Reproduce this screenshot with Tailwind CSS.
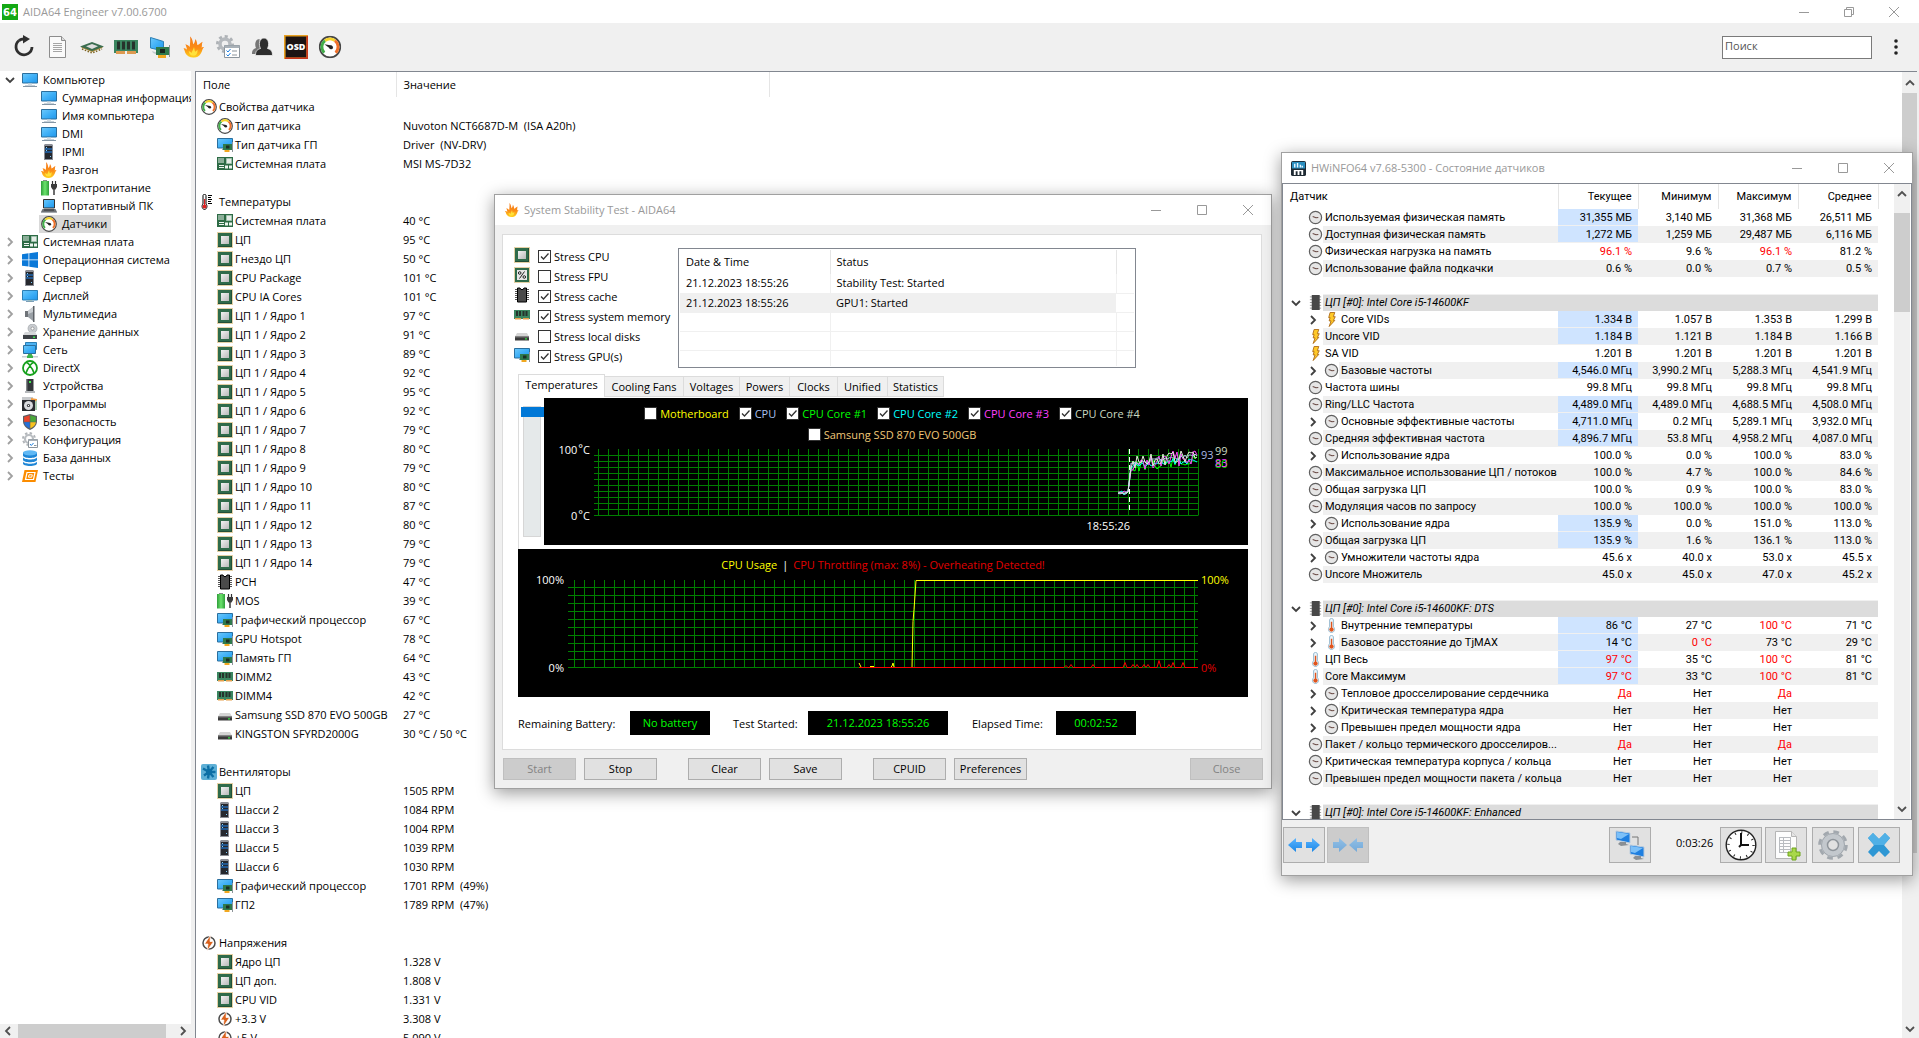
<!DOCTYPE html>
<html lang="ru">
<head>
    <meta charset="UTF-8">
    <meta name="viewport" content="width=device-width, initial-scale=1.0">
    <title>AIDA64 Engineer</title>
    <script src="https://cdn.jsdelivr.net/npm/@tailwindcss/browser@4"></script>
</head>
<body class="h-screen overflow-hidden flex flex-col bg-white text-black text-[11px] leading-4 font-['Open_Sans','Noto_Sans',sans-serif] cursor-default">

    <!-- Icon set -->
    <svg class="absolute size-0" aria-hidden="true" xmlns="http://www.w3.org/2000/svg">
        <defs>
            <linearGradient id="g-blue" x1="0" y1="0" x2="1" y2="1"><stop offset="0" stop-color="#6ec9fb"/><stop offset=".5" stop-color="#3fb0f7"/><stop offset="1" stop-color="#2196ea"/></linearGradient>
            <linearGradient id="g-fire" x1="0" y1="0" x2="0" y2="1"><stop offset="0" stop-color="#f37b1d"/><stop offset=".55" stop-color="#fb8c16"/><stop offset="1" stop-color="#ffd21e"/></linearGradient>
            <linearGradient id="g-grey" x1="0" y1="0" x2="1" y2="1"><stop offset="0" stop-color="#f2f2f2"/><stop offset="1" stop-color="#b9b9b9"/></linearGradient>
            <linearGradient id="g-green" x1="0" y1="0" x2="1" y2="0"><stop offset="0" stop-color="#2f9e3a"/><stop offset=".5" stop-color="#6be36c"/><stop offset="1" stop-color="#2f9e3a"/></linearGradient>
            <linearGradient id="g-arrow" x1="0" y1="0" x2="0" y2="1"><stop offset="0" stop-color="#5ab4ff"/><stop offset="1" stop-color="#1b87e6"/></linearGradient>
        </defs>
        <symbol id="monitor" viewBox="0 0 16 16"><path d="M.5 1.500h15v9.500H.5z" fill="url(#g-blue)" stroke="#2b6f9e"/><path d="M6 11.500h4V13H6z" fill="#d5dde3"/><path d="M1 14.500h14" stroke="#8597a6"/><path d="M3 13.500h10" stroke="#c8d2da"/></symbol>
        <symbol id="display" viewBox="0 0 16 16"><path d="M.5 2.500h15v9.500H.5z" fill="url(#g-blue)" stroke="#2b7fb5"/><path d="M6 12h4v1.500H6z" fill="#9bb"/><path d="M4 13.500h8" stroke="#7d9fb5"/></symbol>
        <symbol id="server" viewBox="0 0 16 16"><path d="M3 1l1-1h7l1 1v15H3z" fill="#8b8e96"/><path d="M4 2h7v13H4z" fill="#26282e"/><path d="M4 5h7M4 8h7" stroke="#1d84f0"/><path d="M5 3h1v1H5zM5 6h1v1H5zM9 12h1v1H9z" fill="#7fd0ff"/></symbol>
        <symbol id="flame" viewBox="0 0 16 16"><path d="M5 0c2 2 2 4 2.400 6C8.500 5 8.800 3.500 9 2c1.500 2 1.200 3.300 1.500 4.500C12 6 13 4.500 14.500 4c-1 2-.2 3-.8 4.500C14.500 8 15 8 15.500 8c-1.500 1.500-1 3-2.500 5-1.200 2-3 3-5.500 3-3 0-5-1.500-6-3.500C1 11 .8 10 0 9c1.200 0 2 .2 2.700 1C2.500 8.500 2 7 1.500 6 3 6.500 4 7 4.800 8 5 5 5.500 3 5 0z" fill="url(#g-fire)"/><path d="M8 8c.5 1.500.2 2.500 1 3.500.8-.5 1-1 1.700-1.500 0 3-1 4.500-3.200 4.500S4.500 13.500 4 11c1 .5 1.700.8 2.300 1.500C6.500 11 7.500 10 8 8z" fill="#ffe23a"/></symbol>
        <symbol id="battery" viewBox="0 0 16 16"><path d="M2 0h4v1h2v14.500H0V1h2z" fill="url(#g-green)"/><path d="M2 0h4v1H2z" fill="#8a8a8a"/><path d="M11.500 1v3M14.500 1v3" stroke="#333" stroke-width="1.200"/><path d="M10 4h6v3l-1.500 2.500h-3L10 7z" fill="#3b3b3b"/><path d="M13 9v6" stroke="#3b3b3b" stroke-width="1.500"/></symbol>
        <symbol id="laptop" viewBox="0 0 16 16"><path d="M2.500 1.500h11v8.500h-11z" fill="url(#g-blue)" stroke="#333"/><path d="M1.500 11h13l1.500 3H0z" fill="#6e7277"/><path d="M3 11.500h10v1H3z" fill="#2c2f33"/><path d="M0 14h16v1H0z" fill="#a5aab0"/></symbol>
        <symbol id="gauge" viewBox="0 0 16 16"><circle cx="8" cy="8" r="7.300" fill="#fff" stroke="#474747" stroke-width="1.200"/><path d="M3.900 12A5.700 5.700 0 0 1 4.500 3.500" fill="none" stroke="#41ad49" stroke-width="2"/><path d="M4.500 3.500A5.700 5.700 0 0 1 11.500 3.500" fill="none" stroke="#f5d32d" stroke-width="2"/><path d="M11.500 3.500A5.700 5.700 0 0 1 12 12" fill="none" stroke="#f0702a" stroke-width="2"/><path d="M4 6l5.200 1-1.200 2z" fill="#222"/><circle cx="8.800" cy="8.300" r="1.300" fill="#222"/></symbol>
        <symbol id="board" viewBox="0 0 16 16"><path d="M0 1h16v13H0z" fill="#2d6b45"/><path d="M2 2v5M4 2v5M6 2v5" stroke="#e9f2ec"/><path d="M9.500 2.500h5v5h-5z" fill="#e4ebe6" stroke="#9fc2ad"/><path d="M2 9h5v1H2zM2 11h5v1H2zM8 9.500h3v3H8zM12 9.500h3v3h-3z" fill="#eef5f0"/></symbol>
        <symbol id="windows" viewBox="0 0 16 16"><path d="M0 2.200l6.500-.9v6.200H0zM7.300 1.200L16 0v7.500H7.300zM0 8.300h6.500v6.300L0 13.700zM7.300 8.300H16V16l-8.700-1.200z" fill="#0b79d8"/></symbol>
        <symbol id="speaker" viewBox="0 0 16 16"><path d="M3 5h3v6H3z" fill="#6f7378"/><path d="M6 5l5-4v14l-5-4z" fill="#9aa0a6"/><path d="M11 0h1.500v16H11z" fill="#5d6166"/><path d="M6 5l5-4v5l-5 2z" fill="#c9cdd1"/></symbol>
        <symbol id="storage" viewBox="0 0 16 16"><circle cx="10.500" cy="4.500" r="4.500" fill="#c9ccd0" stroke="#9b9fa3" stroke-width=".6"/><circle cx="10.500" cy="4.500" r="1.500" fill="#fff" stroke="#888" stroke-width=".7"/><path d="M3 8h10l2 3H1z" fill="#d6d8da"/><path d="M1 11h14v4H1z" fill="#3d4146"/><path d="M11 12.500h2v1.500h-2z" fill="#35e04a"/></symbol>
        <symbol id="network" viewBox="0 0 16 16"><path d="M3.500.5h11v7h-11z" fill="#4bb2f2" stroke="#2b7fb5"/><path d="M1.500 3.500h12v8h-12z" fill="url(#g-blue)" stroke="#2b6f9e"/><path d="M6 12h4v2H6z" fill="#4caf50"/><path d="M0 14h16v1.500H0z" fill="#c9cfd3"/><path d="M5 13.500h6v2.500H5z" fill="#3cb44a"/></symbol>
        <symbol id="directx" viewBox="0 0 16 16"><circle cx="8" cy="8" r="7" fill="#fff" stroke="#16a01c" stroke-width="1.800"/><path d="M4 13c1-3 2.500-5.500 4-7 1.500 1.500 3 4 4 7M4.500 2.500C6 3 7 4 8 5.500 9 4 10 3 11.500 2.500" fill="none" stroke="#16a01c" stroke-width="1.600"/></symbol>
        <symbol id="device" viewBox="0 0 16 16"><path d="M4.500 1h7v12h-7z" fill="#33363a"/><path d="M7 3h2v2H7z" fill="#42e84f"/><path d="M3 13h10v2H3z" fill="#b5b8bb"/><path d="M4.500 1h1v12h-1z" fill="#6c7075"/></symbol>
        <symbol id="programs" viewBox="0 0 16 16"><path d="M0 1h11v3H0z" fill="#c7c9cc"/><path d="M9 2l6 1v7H9z" fill="#f09a3e"/><path d="M11 7l4-3v10h-4z" fill="#a8c9b0"/><path d="M0 4h13v11H0z" fill="#2a2c30"/><circle cx="6.500" cy="9.500" r="4.500" fill="#d9dbde"/><circle cx="6.500" cy="9.500" r="1.600" fill="#2a2c30"/><circle cx="6.500" cy="9.500" r=".7" fill="#fff"/></symbol>
        <symbol id="shield" viewBox="0 0 16 16"><path d="M8 0l7 2v5c0 4-3 7.500-7 9-4-1.500-7-5-7-9V2z" fill="#5a5f63"/><path d="M7.700 1.300v6.400H2.100V2.900z" fill="#e8452c"/><path d="M8.300 1.300v6.400h5.600V2.900z" fill="#4aa83a"/><path d="M2.100 8.300h5.600v6.200c-3-1.300-5.200-3.500-5.600-6.200z" fill="#2470d8"/><path d="M13.900 8.300H8.300v6.200c3-1.300 5.200-3.500 5.600-6.200z" fill="#f9c31d"/></symbol>
        <symbol id="config" viewBox="0 0 16 16"><circle cx="7" cy="7" r="6" fill="none" stroke="#b0b4b8" stroke-width="2" stroke-dasharray="2.400 2.300"/><circle cx="7" cy="7" r="4" fill="#fff" stroke="#b9bdc1" stroke-width="2.200"/><path d="M6.500 7.500h9v8h-9z" fill="#fff" stroke="#8c959c"/><path d="M6.500 7.500h9v1.500h-9z" fill="#a9b1b8"/><path d="M8 12l1.300 1.500L11.500 11" fill="none" stroke="#1d7fe0"/><path d="M12 13.500h2.500" stroke="#8c959c"/></symbol>
        <symbol id="database" viewBox="0 0 16 16"><path d="M1 2.500v11C1 15 4 16 8 16s7-1 7-2.500v-11z" fill="#1f86d6"/><path d="M1 5.800c1 3 13 3 14 0v1.400c-1 3-13 3-14 0zM1 10c1 3 13 3 14 0v1.400c-1 3-13 3-14 0z" fill="#fff"/><ellipse cx="8" cy="2.800" rx="7" ry="2.600" fill="#5fb8f5"/></symbol>
        <symbol id="tests" viewBox="0 0 16 16"><path d="M2.500 2H16l-2.500 12H0z" fill="#fb8c00"/><path d="M5 4.500h8L11.500 11.500H3.500z" fill="none" stroke="#fff" stroke-width="1.200"/><path d="M7 6.800h3.300l-.6 2.400H6.500z" fill="none" stroke="#fff"/></symbol>
        <symbol id="cpu" viewBox="0 0 16 16"><path d="M.5 .5h15v15H.5z" fill="none" stroke="#c9a24a" stroke-dasharray="1 1"/><path d="M1 1h14v14H1z" fill="#2f6b4a"/><path d="M1 14h14v1H1zM14 1h1v14h-1z" fill="#234f38"/><path d="M4 4h8v8H4z" fill="url(#g-grey)"/></symbol>
        <symbol id="fpu" viewBox="0 0 16 16"><path d="M.5 .5h15v15H.5z" fill="none" stroke="#c9a24a" stroke-dasharray="1 1"/><path d="M1 1h14v14H1z" fill="#2f6b4a"/><path d="M3 3h10v10H3z" fill="#e6e6e6"/><circle cx="5.700" cy="6" r="1.300" fill="none" stroke="#222"/><circle cx="10.300" cy="10" r="1.300" fill="none" stroke="#222"/><path d="M10.500 4.500l-5 7" stroke="#222"/></symbol>
        <symbol id="chip" viewBox="0 0 16 16"><path d="M1 2.500h14M1 4.500h14M1 6.500h14M1 8.500h14M1 10.500h14M1 12.500h14" stroke="#555"/><path d="M3.500 1H6l1 1.500h2L10 1h2.500v14h-9z" fill="#4a4a4a" stroke="#000"/></symbol>
        <symbol id="gpu" viewBox="0 0 16 16"><path d="M.5 1.500h15v9.500H.5z" fill="url(#g-blue)" stroke="#2b6f9e"/><path d="M6 7h9v6H6z" fill="#2f7a4c"/><path d="M9 8.500h3.500v3H9z" fill="#1c2f25"/><path d="M15.500 5v10" stroke="#8d9499"/><path d="M7.500 13h5v2h-5z" fill="#f1a820"/><path d="M5 11.500h1v1.500H5z" fill="#9aa"/></symbol>
        <symbol id="ram" viewBox="0 0 16 16"><path d="M0 3h16v9H0z" fill="#3b8660"/><path d="M2 4h2v5H2zM5 4h2v5H5zM8.500 4h2v5h-2zM11.500 4h2v5h-2z" fill="#26332c"/><path d="M1 11h6v1.500H1zM9 11h6v1.500H9z" fill="#e6a04c"/></symbol>
        <symbol id="drive" viewBox="0 0 16 16"><path d="M3 6h10l2 3.500H1z" fill="#d4d4d4"/><path d="M1 9.500h14v4H1z" fill="#3a3a3a"/><path d="M1 9.500h14v1H1z" fill="#777"/><path d="M11 11.200h2v1.300h-2z" fill="#30e040"/></symbol>
        <symbol id="thermo" viewBox="0 0 16 16"><path d="M5 1.500c0-1.500-3-1.500-3 0V10c-2 2-.5 5.500 1.500 5.500S7 12 5 10z" fill="#fff" stroke="#000"/><path d="M3 5h1.200v6H3z" fill="#d22"/><circle cx="3.500" cy="12.500" r="2" fill="#d22"/><path d="M7 1.500h4M7 3.500h3M7 5.500h4M7 7.500h3M7 9.500h4" stroke="#000"/></symbol>
        <symbol id="fan" viewBox="0 0 16 16"><rect width="16" height="16" rx="2" fill="#5fb0d6"/><path d="M8 8L7 1.500M8 8L12.500 3M8 8l6.500 0M8 8l4.500 5M8 8l-1 6.500M8 8l-5 3.500M8 8L2 4.500" stroke="#0d6fa5" stroke-width="2.400"/><circle cx="8" cy="8" r="3" fill="#0d6fa5"/></symbol>
        <symbol id="volt" viewBox="0 0 16 16"><circle cx="8" cy="8" r="6" fill="#fff" stroke="#4b4b4b" stroke-width="1.500"/><path d="M9.500 0L3.500 9H7l-1 7 6.500-9.500H9z" fill="#d9611c" stroke="#fff" stroke-width=".7"/></symbol>
        <symbol id="dial" viewBox="0 0 16 16"><circle cx="8" cy="8" r="6.500" fill="#e6e6e6" stroke="#606060" stroke-width="1.300"/><path d="M5 7l3.500 1.300L11 8" fill="none" stroke="#6a4a44" stroke-width="1.200"/></symbol>
        <symbol id="bolt" viewBox="0 0 16 16"><path d="M6.500 .5h5L10 5h2l-2 4h1.500L5.500 15.500 7.500 9.500H5.500L6.500 6H5z" fill="#ffc928" stroke="#a86410" stroke-width=".9"/></symbol>
        <symbol id="therm" viewBox="0 0 16 16"><path d="M6 2c0-2 4-2 4 0v7.500c2.500 2 1 6-2 6s-4.500-4-2-6z" fill="#eef6fb" stroke="#8fb4cc"/><path d="M7.300 4h1.500v7H7.300z" fill="#e0551d"/><circle cx="8" cy="12.300" r="2.300" fill="#e0551d"/></symbol>
        <symbol id="darkchip" viewBox="0 0 16 16"><path d="M2 2h12M2 5h12M2 8h12M2 11h12M2 14h12" stroke="#999"/><path d="M4 0h8.500v16H4z" fill="#484848"/></symbol>
        <symbol id="chev-r" viewBox="0 0 10 10"><path d="M3 1l4 4-4 4" fill="none" stroke="currentColor" stroke-width="1.800"/></symbol>
        <symbol id="chev-d" viewBox="0 0 10 10"><path d="M1 3l4 4 4-4" fill="none" stroke="currentColor" stroke-width="1.800"/></symbol>
        <symbol id="chev-l" viewBox="0 0 10 10"><path d="M7 1L3 5l4 4" fill="none" stroke="currentColor" stroke-width="1.800"/></symbol>
        <symbol id="chev-u" viewBox="0 0 10 10"><path d="M1 7l4-4 4 4" fill="none" stroke="currentColor" stroke-width="1.800"/></symbol>
        <symbol id="w-min" viewBox="0 0 10 10"><path d="M0 5.500h10" stroke="currentColor"/></symbol>
        <symbol id="w-max" viewBox="0 0 10 10"><path d="M.5 .5h9v9h-9z" fill="none" stroke="currentColor"/></symbol>
        <symbol id="w-res" viewBox="0 0 10 10"><path d="M.5 2.500h7v7h-7zM2.500 2.500v-2h7v7h-2" fill="none" stroke="currentColor"/></symbol>
        <symbol id="w-x" viewBox="0 0 10 10"><path d="M0 0l10 10M10 0L0 10" stroke="currentColor"/></symbol>
    </svg>

    <!-- Title bar -->
    <header class="h-[23px] shrink-0 flex items-center pl-[2px] pr-5 text-[#999]">
        <svg viewBox="0 0 16 16" class="size-4 font-['DejaVu_Sans',sans-serif]"><path d="M0 0h16v16H0z" fill="#14a814"/><text x="8" y="12" text-anchor="middle" font-size="10" font-weight="bold" fill="#fff">64</text></svg>
        <h1 class="ml-[5px] flex-1">AIDA64 Engineer v7.00.6700</h1>
        <div class="flex gap-[35px]">
            <button aria-label="Свернуть"><svg class="size-[10px]"><use href="#w-min"/></svg></button>
            <button aria-label="Восстановить"><svg class="size-[10px]"><use href="#w-res"/></svg></button>
            <button aria-label="Закрыть"><svg class="size-[10px]"><use href="#w-x"/></svg></button>
        </div>
    </header>

    <!-- Toolbar -->
    <div class="h-12 shrink-0 flex items-center bg-[#f0f0f0] pl-3 pr-4">
        <div class="flex flex-1 items-center gap-[10px]">
            <button aria-label="Обновить"><svg viewBox="0 0 24 24" class="size-6"><path d="M7 5.500A8 8 0 1 0 20 12" fill="none" stroke="#2f2f2f" stroke-width="2.800"/><path d="M7 5.500A8 8 0 0 1 12 4" fill="none" stroke="#2f2f2f" stroke-width="2.800"/><path d="M11 0l7 4-7 4.500z" fill="#2f2f2f"/></svg></button>
            <button aria-label="Отчёт"><svg viewBox="0 0 24 24" class="size-6"><path d="M3.500 1.500h12l4 4v17h-16z" fill="#fafafa" stroke="#8d8d8d"/><path d="M15.500 1.500v4h4" fill="#ddd" stroke="#8d8d8d"/><path d="M7 8.500h9M7 10.500h9M7 12.500h9M7 14.500h9M7 16.500h9" stroke="#a5a5a5"/></svg></button>
            <button aria-label="ЦП"><svg viewBox="0 0 24 24" class="size-6"><path d="M1 12.500L12 8l11 4.500L12 17z" fill="#a9862f"/><path d="M2 14l10 4 10-4" fill="none" stroke="#7c6322" stroke-width="1.500" stroke-dasharray="1.500 1.500"/><path d="M0 11.500L12 7l12 4.500L12 16z" fill="#3b6d50"/><path d="M6 11.300L12 9l6 2.300L12 14z" fill="#dedede"/></svg></button>
            <button aria-label="Память"><svg viewBox="0 0 24 24" class="size-6"><path d="M0 5h24v13H0z" fill="#3b8660"/><path d="M3 6.500h3v8H3zM8 6.500h3v8H8zM13 6.500h3v8h-3zM18 6.500h3v8h-3z" fill="#26332c"/><path d="M2 16h9v3H2zM13 16h9v3h-9z" fill="#dd9a50"/><path d="M11 16h2v3h-2z" fill="#f0f0f0"/></svg></button>
            <button aria-label="Видео"><svg viewBox="0 0 24 24" class="size-6"><path d="M2.500 2.500l13 4v9.500l-13-3z" fill="url(#g-blue)" stroke="#2b7fb5"/><path d="M4 16l6 2v2l-5-2z" fill="#c3cbd0"/><path d="M8 12h13v8H8z" fill="#2f7a4c"/><path d="M12 14h5v4h-5z" fill="#17261d"/><path d="M21.500 10v12" stroke="#8d9499"/><path d="M10 20h8v3h-8z" fill="#f1a820"/></svg></button>
            <button aria-label="Тест стабильности"><svg viewBox="-1 -1 18 18" class="size-6"><use href="#flame" width="16" height="16"/></svg></button>
            <button aria-label="Настройка"><svg viewBox="0 0 24 24" class="size-6"><circle cx="9" cy="9" r="7.500" fill="none" stroke="#aeb2b6" stroke-width="3" stroke-dasharray="3 2.800"/><circle cx="9" cy="9" r="5" fill="none" stroke="#b5b9bd" stroke-width="3.500"/><path d="M8.500 10.500h15v12h-15z" fill="#fff" stroke="#8c959c"/><path d="M8.500 10.500h15v2.500h-15z" fill="#a9b1b8"/><path d="M10.500 15.500l1.500 1.500 2.500-3M10.500 19.500l1.500 1.500 2.500-3" fill="none" stroke="#1d7fe0"/><path d="M16 16h5M16 20h5" stroke="#8c959c"/></svg></button>
            <button aria-label="Пользователи"><svg viewBox="0 0 24 24" class="size-6"><path d="M2 19c0-4 1.500-5 4-6C4.500 10.500 5 4 9.500 4l1 8-1 7z" fill="#777"/><path d="M5.500 20.500c0-5 2-6 5-7C8.500 10 9 3 14 3s5.500 7 3.500 10.500c3 1 5 2 5 7z" fill="#2e2e2e" stroke="#f0f0f0" stroke-width=".8"/></svg></button>
            <button aria-label="OSD"><svg viewBox="0 0 24 24" class="size-6"><path d="M.8 .8h22.400v22.400H.8z" fill="#1c1414" stroke="#e8a020" stroke-width="1.600"/><path d="M23.200 1v22.200H1" fill="none" stroke="#c8341c" stroke-width="1.600"/><text x="12" y="15" text-anchor="middle" font-size="9" font-weight="800" fill="#fff">OSD</text></svg></button>
            <button aria-label="Датчики"><svg viewBox="-.5 -.5 17 17" class="size-6"><use href="#gauge" width="16" height="16"/></svg></button>
        </div>
        <input type="text" placeholder="Поиск" aria-label="Поиск" class="w-[150px] h-[23px] border border-[#7a7a7a] bg-white px-[2px] pb-1 placeholder:text-[#555] outline-none">
        <button aria-label="Меню" class="ml-[17px]"><svg viewBox="0 0 14 20" class="w-[14px] h-5" fill="#222"><circle cx="7" cy="4" r="1.800"/><circle cx="7" cy="10" r="1.800"/><circle cx="7" cy="16" r="1.800"/></svg></button>
    </div>

    <!-- Tree and sensor list -->
    <div class="flex-1 min-h-0 flex bg-[#f0f0f0] pr-[2px]">
        <nav class="w-[191px] shrink-0 flex flex-col bg-white overflow-hidden">
            <ul id="tree" class="flex-1 min-h-0 overflow-hidden"></ul>
            <div class="h-[14px] shrink-0 flex items-center justify-between bg-[#f0f0f0] px-[3px] text-[#505050]">
                <svg class="size-[10px]"><use href="#chev-l"/></svg>
                <div class="w-[148px] h-full bg-[#cdcdcd] mr-3 ml-1"></div>
                <svg class="size-[10px]"><use href="#chev-r"/></svg>
            </div>
        </nav>
        <main class="ml-1 flex-1 min-w-0 flex bg-white border-l border-t border-[#828790] overflow-hidden">
            <div class="flex-1 min-w-0 overflow-hidden">
                <table class="w-full table-fixed border-collapse">
                    <colgroup><col class="w-[200px]"><col class="w-[373px]"><col></colgroup>
                    <thead>
                        <tr class="h-[25px] text-left">
                            <th class="font-normal pl-[7px] border-r border-[#e5e5e5]">Поле</th>
                            <th class="font-normal pl-[7px] border-r border-[#e5e5e5]">Значение</th>
                            <th></th>
                        </tr>
                    </thead>
                    <tbody id="sensors"></tbody>
                </table>
            </div>
            <div class="w-[15px] shrink-0 flex flex-col items-center justify-between bg-[#f0f0f0] py-1 text-[#505050]">
                <svg class="size-[10px] my-[2px]"><use href="#chev-u"/></svg>
                <div class="w-full h-[760px] mb-auto mt-[3px] bg-[#cdcdcd]"></div>
                <svg class="size-[10px]"><use href="#chev-d"/></svg>
            </div>
        </main>
    </div>

    <!-- System Stability Test -->
    <section class="absolute left-[494px] top-[194px] w-[778px] border border-[#a0a0a0] bg-[#f0f0f0] shadow-[0_4px_16px_rgba(0,0,0,0.4)]">
        <header class="h-[30px] flex items-center bg-white pl-[10px] pr-[18px] text-[#999]">
            <svg class="size-[14px]"><use href="#flame"/></svg>
            <h2 class="ml-[5px] flex-1">System Stability Test - AIDA64</h2>
            <div class="flex gap-9">
                <button aria-label="Minimize"><svg class="size-[10px]"><use href="#w-min"/></svg></button>
                <button aria-label="Maximize"><svg class="size-[10px]"><use href="#w-max"/></svg></button>
                <button aria-label="Close window"><svg class="size-[10px]"><use href="#w-x"/></svg></button>
            </div>
        </header>
        <div class="mx-[7px] mt-[9px] mr-[9px] px-[15px] pr-[13px] border border-[#dcdcdc] bg-white">
            <div class="flex pt-[11px] pb-[6px] -ml-1">
                <div id="stress" class="w-[164px] shrink-0"></div>
                <div class="mt-[2px] w-[458px] h-[120px] border border-[#828790] p-[1px]">
                    <table class="w-full table-fixed border-collapse">
                        <colgroup><col class="w-[150px]"><col class="w-[286px]"><col></colgroup>
                        <thead>
                            <tr class="h-[24px] text-left">
                                <th class="font-normal pl-[6px] border-r border-[#e5e5e5]">Date &amp; Time</th>
                                <th class="font-normal pl-[6px] border-r border-[#e5e5e5]">Status</th>
                                <th></th>
                            </tr>
                        </thead>
                        <tbody>
                            <tr class="h-[19px] border-b border-[#f0f0f0]"><td class="pl-[6px] border-r border-[#f0f0f0]">21.12.2023 18:55:26</td><td class="pl-[6px] border-r border-[#f0f0f0]">Stability Test: Started</td><td></td></tr>
                            <tr class="h-[19px] border-b border-[#f0f0f0]"><td class="pl-[6px] bg-[#f0f0f0]">21.12.2023 18:55:26</td><td class="pl-[6px] bg-[#f0f0f0]">GPU1: Started</td><td></td></tr>
                            <tr class="h-[19px] border-b border-[#f0f0f0]"><td class="border-r border-[#f0f0f0]"></td><td class="border-r border-[#f0f0f0]"></td><td></td></tr>
                            <tr class="h-[19px] border-b border-[#f0f0f0]"><td class="border-r border-[#f0f0f0]"></td><td class="border-r border-[#f0f0f0]"></td><td></td></tr>
                            <tr class="h-[16px]"><td class="border-r border-[#f0f0f0]"></td><td class="border-r border-[#f0f0f0]"></td><td></td></tr>
                        </tbody>
                    </table>
                </div>
            </div>

            <div role="tablist" class="flex items-end h-[23px]">
                <button role="tab" aria-selected="true" class="w-[87px] h-[23px] pb-[2px] border border-b-0 border-[#dcdcdc] bg-white whitespace-nowrap">Temperatures</button>
                <button role="tab" class="w-[79px] h-[21px] border border-l-0 border-[#dcdcdc] bg-[#f0f0f0] whitespace-nowrap">Cooling Fans</button>
                <button role="tab" class="w-[56px] h-[21px] border border-l-0 border-[#dcdcdc] bg-[#f0f0f0]">Voltages</button>
                <button role="tab" class="w-[50px] h-[21px] border border-l-0 border-[#dcdcdc] bg-[#f0f0f0]">Powers</button>
                <button role="tab" class="w-[48px] h-[21px] border border-l-0 border-[#dcdcdc] bg-[#f0f0f0]">Clocks</button>
                <button role="tab" class="w-[50px] h-[21px] border border-l-0 border-[#dcdcdc] bg-[#f0f0f0]">Unified</button>
                <button role="tab" class="w-[56px] h-[21px] border border-l-0 border-[#dcdcdc] bg-[#f0f0f0]">Statistics</button>
            </div>
            <div class="flex border-l border-[#dcdcdc] pt-px pb-1">
                <div class="w-[25px] shrink-0 pl-px pt-2">
                    <input type="range" value="0" aria-label="Scale" class="block w-[23px] h-[131px] appearance-none bg-transparent [writing-mode:vertical-lr] [&::-webkit-slider-runnable-track]:w-[18px] [&::-webkit-slider-runnable-track]:h-full [&::-webkit-slider-runnable-track]:bg-[#e5e9ea] [&::-webkit-slider-runnable-track]:border [&::-webkit-slider-runnable-track]:border-[#d6d6d6] [&::-webkit-slider-thumb]:appearance-none [&::-webkit-slider-thumb]:w-[23px] [&::-webkit-slider-thumb]:h-[10px] [&::-webkit-slider-thumb]:-ml-[3px] [&::-webkit-slider-thumb]:bg-[#0078d7]">
                </div>
                <div class="relative flex-1 bg-black">
                    <div class="absolute inset-x-0 top-[9px] pr-2 flex flex-col items-center gap-2">
                        <div id="series" class="flex gap-[10px]"></div>
                        <div id="series2" class="flex"></div>
                    </div>
                    <svg viewBox="0 0 704 147" class="block w-full h-[147px]">
                        <path id="grid1" fill="none" stroke="#008000"/>
                        <path d="M585.500 51v64" stroke="#fff" stroke-dasharray="5 3"/>
                        <g id="temps" fill="none"></g>
                        <g font-size="11" fill="#fff">
                            <text x="46" y="56" text-anchor="end">100<tspan dx="1" dy="-2">°</tspan><tspan dy="2">C</tspan></text>
                            <text x="46" y="122" text-anchor="end">0<tspan dx="1" dy="-2">°</tspan><tspan dy="2">C</tspan></text>
                            <text x="586" y="132" text-anchor="end">18:55:26</text>
                            <text x="657" y="61" fill="#a9b8e6">93</text>
                            <text x="671" y="57" fill="#c8d8c0">99</text>
                            <text x="671" y="70" fill="#00ff00">80</text>
                            <text x="671" y="69" fill="#ff40ff">83</text>
                        </g>
                    </svg>
                </div>
            </div>
            <svg viewBox="0 0 730 148" class="block w-full h-[148px] bg-black">
                <path id="grid2" fill="none" stroke="#008000"/>
                <path d="M341 114l2 4M352 117.500h4M373 118l1-1 1-3 1 4M394 118.500l1-46 1-12 2-29h282" fill="none" stroke="#ff0"/>
                <path id="throttle" fill="none" stroke="#f00"/>
                <g font-size="11">
                    <text x="365" y="20" text-anchor="middle" fill="#e00000"><tspan fill="#ff0">CPU Usage</tspan><tspan fill="#fff" dx="5">|</tspan><tspan dx="5">CPU Throttling (max: 8%) - Overheating Detected!</tspan></text>
                    <text x="46" y="35" text-anchor="end" fill="#fff">100%</text>
                    <text x="46" y="123" text-anchor="end" fill="#fff">0%</text>
                    <text x="683" y="35" fill="#ff0">100%</text>
                    <text x="683" y="123" fill="#e00000">0%</text>
                </g>
            </svg>
            <div class="flex items-center pt-[14px] pb-[13px]">
                <span class="w-[112px]">Remaining Battery:</span>
                <output class="w-20 h-6 mb-px bg-black text-[#0f0] text-center leading-6">No battery</output>
                <span class="ml-[23px] w-[75px]">Test Started:</span>
                <output class="w-[140px] h-6 mb-px bg-black text-[#0f0] text-center leading-6">21.12.2023 18:55:26</output>
                <span class="ml-6 w-[84px]">Elapsed Time:</span>
                <output class="w-20 h-6 mb-px bg-black text-[#0f0] text-center leading-6">00:02:52</output>
            </div>
        </div>
        <div class="flex gap-2 p-2">
            <button disabled class="w-[73px] h-[22px] border border-[#bfbfbf] bg-[#ccc] text-[#838383]">Start</button>
            <button class="w-[73px] h-[22px] border border-[#adadad] bg-[#e1e1e1]">Stop</button>
            <button class="ml-[23px] w-[73px] h-[22px] border border-[#adadad] bg-[#e1e1e1]">Clear</button>
            <button class="w-[73px] h-[22px] border border-[#adadad] bg-[#e1e1e1]">Save</button>
            <button class="ml-[23px] w-[73px] h-[22px] border border-[#adadad] bg-[#e1e1e1]">CPUID</button>
            <button class="w-[73px] h-[22px] border border-[#adadad] bg-[#e1e1e1]">Preferences</button>
            <button disabled class="ml-auto w-[73px] h-[22px] border border-[#bfbfbf] bg-[#ccc] text-[#838383]">Close</button>
        </div>
    </section>

    <!-- HWiNFO64 -->
    <section class="absolute right-[6px] top-[152px] w-[632px] border border-[#a0a0a0] bg-[#f0f0f0] shadow-[0_4px_16px_rgba(0,0,0,0.4)]">
        <header class="h-[30px] flex items-center bg-white pl-[9px] pr-[18px] text-[#999]">
            <svg viewBox="0 0 16 16" class="size-[15px]"><rect width="16" height="16" rx="2" fill="#1e2a33"/><path d="M1 1h14v7H1z" fill="#2b8fc0"/><path d="M4 3v4M7 2v5M10 4v3M12 5v2" stroke="#e8f6ff" stroke-width="1.500"/><path d="M3 9.500h10v1.500H3zM3 11h2v4H3zM7 11h2v4H7zM11 11h2v4h-2z" fill="#fff"/></svg>
            <h2 class="ml-[5px] flex-1">HWiNFO64 v7.68-5300 - Состояние датчиков</h2>
            <div class="flex gap-9">
                <button aria-label="Свернуть"><svg class="size-[10px]"><use href="#w-min"/></svg></button>
                <button aria-label="Развернуть"><svg class="size-[10px]"><use href="#w-max"/></svg></button>
                <button aria-label="Закрыть"><svg class="size-[10px]"><use href="#w-x"/></svg></button>
            </div>
        </header>
        <div class="h-[637px] flex bg-white border border-[#828790] overflow-hidden font-['Roboto','Open_Sans',sans-serif]">
            <div class="flex-1 overflow-hidden">
                <table class="w-[595px] table-fixed border-collapse">
                    <colgroup><col class="w-[275px]"><col class="w-20"><col class="w-20"><col class="w-20"><col class="w-20"></colgroup>
                    <thead>
                        <tr class="h-[25px] text-right">
                            <th class="font-normal text-left pl-[7px] border-r border-[#e5e5e5]">Датчик</th>
                            <th class="font-normal pr-[6px] border-r border-[#e5e5e5]">Текущее</th>
                            <th class="font-normal pr-[6px] border-r border-[#e5e5e5]">Минимум</th>
                            <th class="font-normal pr-[6px] border-r border-[#e5e5e5]">Максимум</th>
                            <th class="font-normal pr-[6px] border-r border-[#e5e5e5]">Среднее</th>
                        </tr>
                    </thead>
                    <tbody id="hw"></tbody>
                </table>
            </div>
            <div class="mr-px w-[16px] shrink-0 flex flex-col items-center bg-[#f0f0f0] py-[5px] text-[#505050]">
                <svg class="size-[10px]"><use href="#chev-u"/></svg>
                <div class="mt-[14px] w-full h-[99px] bg-[#cdcdcd]"></div>
                <svg class="size-[10px] mt-auto"><use href="#chev-d"/></svg>
            </div>
        </div>
        <div class="flex items-center pl-px pr-3 pt-[7px] pb-3">
            <button aria-label="Развернуть столбцы" class="w-[42px] h-9 border border-[#adadad] bg-[#e1e1e1] flex items-center justify-center"><svg viewBox="0 0 34 20" class="w-[34px] h-5" fill="url(#g-arrow)"><path d="M1 10l8-7v4h6v6H9v4zM33 10l-8-7v4h-6v6h6v4z"/></svg></button>
            <button disabled aria-label="Свернуть столбцы" class="ml-[2px] w-[42px] h-9 border border-[#bfbfbf] bg-[#ccc] flex items-center justify-center"><svg viewBox="0 0 34 20" class="w-[34px] h-5 opacity-50" fill="url(#g-arrow)"><path d="M16 10L8 3v4H2v6h6v4zM18 10l8-7v4h6v6h-6v4z"/></svg></button>
            <button aria-label="Сеть" class="ml-auto w-[42px] h-9 border border-[#adadad] bg-[#e1e1e1] flex items-center justify-center"><svg viewBox="0 0 32 32" class="size-8"><path d="M18 8h6v8" fill="none" stroke="#777"/><path d="M2 2l14 2v10L2 11z" fill="#1f7fe0" stroke="#bcd"/><path d="M3 3l12 2-8 5-4-1z" fill="#7cc0f8"/><path d="M6 13h6v2l3 1-8 1-3-2z" fill="#8a8f94"/><path d="M16 16l14 2v10l-14-3z" fill="#1f7fe0" stroke="#bcd"/><path d="M17 17l12 2-8 5-4-1z" fill="#7cc0f8"/><path d="M21 27h6v2l3 1-8 1-3-2z" fill="#8a8f94"/></svg></button>
            <time class="ml-[25px] w-[39px] pb-1">0:03:26</time>
            <button aria-label="Часы" class="ml-[5px] w-[42px] h-9 border border-[#adadad] bg-[#e1e1e1] flex items-center justify-center"><svg viewBox="0 0 32 32" class="size-8"><circle cx="16" cy="16" r="14.800" fill="#fff" stroke="#222" stroke-width="1.400"/><circle cx="16" cy="16" r="12.500" fill="none" stroke="#222" stroke-width="2.500" stroke-dasharray="1 5.540"/><path d="M16 4v12h8" fill="none" stroke="#111" stroke-width="2"/><path d="M14 18l2-2" stroke="#111" stroke-width="2"/></svg></button>
            <button aria-label="Журнал" class="ml-[3px] w-[42px] h-9 border border-[#adadad] bg-[#e1e1e1] flex items-center justify-center"><svg viewBox="0 0 32 32" class="size-8"><path d="M5.500 2.500h16l5 5v22h-21z" fill="#fdfdfd" stroke="#b5b5b5"/><path d="M21.500 2.500v5h5" fill="#e4e4e4" stroke="#b5b5b5"/><path d="M9 8.500h12M9 11.500h12M9 14.500h12M9 17.500h12M9 20.500h12M9 23.500h12M9.500 8v16M13.500 8v16M20.500 8v16" stroke="#b9bcc0"/><path d="M22 19h4v4h4v4h-4v4h-4v-4h-4v-4h4z" fill="#a9d84a" stroke="#6fa51c"/></svg></button>
            <button aria-label="Параметры" class="ml-[5px] w-[42px] h-9 border border-[#adadad] bg-[#e1e1e1] flex items-center justify-center"><svg viewBox="0 0 32 32" class="size-8"><circle cx="16" cy="16" r="12.800" fill="none" stroke="#a2a8ae" stroke-width="4" stroke-dasharray="5.500 4.553"/><circle cx="16" cy="16" r="9" fill="none" stroke="#c3c8cd" stroke-width="6"/><circle cx="16" cy="16" r="11.500" fill="none" stroke="#a2a8ae"/><circle cx="16" cy="16" r="5.500" fill="#e1e1e1" stroke="#8f959b" stroke-width="1.500"/></svg></button>
            <button aria-label="Выход" class="ml-1 w-[42px] h-9 border border-[#adadad] bg-[#e1e1e1] flex items-center justify-center"><svg viewBox="0 0 32 32" class="size-8"><path d="M5 9l5-5 6 6 6-6 5 5-6 7 6 7-5 5-6-6-6 6-5-5 6-7z" fill="#2e97d4"/><path d="M5 9l5-5 6 6 6-6 5 5-6 7H11z" fill="#4fb0e6"/></svg></button>
        </div>
    </section>

    <script>
        const icon = (id, cls) => `<svg class="${cls}"><use href="#${id}"/></svg>`;

        // [level, icon, label]
        const tree = [
            [0, 'monitor', 'Компьютер'], [1, 'monitor', 'Суммарная информация'], [1, 'monitor', 'Имя компьютера'],
            [1, 'monitor', 'DMI'], [1, 'server', 'IPMI'], [1, 'flame', 'Разгон'], [1, 'battery', 'Электропитание'],
            [1, 'laptop', 'Портативный ПК'], [1, 'gauge', 'Датчики'], [0, 'board', 'Системная плата'],
            [0, 'windows', 'Операционная система'], [0, 'server', 'Сервер'], [0, 'display', 'Дисплей'],
            [0, 'speaker', 'Мультимедиа'], [0, 'storage', 'Хранение данных'], [0, 'network', 'Сеть'],
            [0, 'directx', 'DirectX'], [0, 'device', 'Устройства'], [0, 'programs', 'Программы'],
            [0, 'shield', 'Безопасность'], [0, 'config', 'Конфигурация'], [0, 'database', 'База данных'], [0, 'tests', 'Тесты']
        ];
        document.getElementById('tree').innerHTML = tree.map(([lvl, ic, name], i) => {
            const arrow = lvl ? '' : icon(i ? 'chev-r' : 'chev-d', i ? 'size-[10px] mr-[7px] text-[#a0a0a0]' : 'size-[10px] mr-[7px] text-[#404040]');
            const sel = name === 'Датчики' ? 'bg-[#d9d9d9]' : '';
            return `<li class="h-[18px] flex items-center whitespace-nowrap ${lvl ? 'pl-[39px]' : 'pl-[5px]'}">${arrow}
                <a href="#" class="flex items-center h-full pr-1 ${lvl ? 'pl-[2px]' : ''} ${sel}">${icon(ic, 'size-4 shrink-0')}<span class="ml-[5px]">${name}</span></a></li>`;
        }).join('');

        // [icon, label, value]; no value = group, null = empty line
        const cores = [97, 91, 89, 92, 95, 92, 79, 80, 79, 80, 87, 80, 79, 79];
        const sensors = [
            ['gauge', 'Свойства датчика'],
            ['gauge', 'Тип датчика', 'Nuvoton NCT6687D-M  (ISA A20h)'],
            ['gpu', 'Тип датчика ГП', 'Driver  (NV-DRV)'],
            ['board', 'Системная плата', 'MSI MS-7D32'],
            null,
            ['thermo', 'Температуры'],
            ['board', 'Системная плата', '40 °C'], ['cpu', 'ЦП', '95 °C'], ['cpu', 'Гнездо ЦП', '50 °C'],
            ['cpu', 'CPU Package', '101 °C'], ['cpu', 'CPU IA Cores', '101 °C'],
            ...cores.map((t, i) => ['cpu', `ЦП 1 / Ядро ${i + 1}`, `${t} °C`]),
            ['chip', 'PCH', '47 °C'], ['battery', 'MOS', '39 °C'], ['gpu', 'Графический процессор', '67 °C'],
            ['gpu', 'GPU Hotspot', '78 °C'], ['gpu', 'Память ГП', '64 °C'], ['ram', 'DIMM2', '43 °C'],
            ['ram', 'DIMM4', '42 °C'], ['drive', 'Samsung SSD 870 EVO 500GB', '27 °C'],
            ['drive', 'KINGSTON SFYRD2000G', '30 °C / 50 °C'],
            null,
            ['fan', 'Вентиляторы'],
            ['cpu', 'ЦП', '1505 RPM'], ['server', 'Шасси 2', '1084 RPM'], ['server', 'Шасси 3', '1004 RPM'],
            ['server', 'Шасси 5', '1039 RPM'], ['server', 'Шасси 6', '1030 RPM'],
            ['gpu', 'Графический процессор', '1701 RPM  (49%)'], ['gpu', 'ГП2', '1789 RPM  (47%)'],
            null,
            ['volt', 'Напряжения'],
            ['cpu', 'Ядро ЦП', '1.328 V'], ['cpu', 'ЦП доп.', '1.808 V'], ['cpu', 'CPU VID', '1.331 V'],
            ['volt', '+3.3 V', '3.308 V'], ['volt', '+5 V', '5.090 V']
        ];
        document.getElementById('sensors').innerHTML = sensors.map(s => {
            if (!s) return '<tr class="h-[19px]"><td colspan="3"></td></tr>';
            const [ic, name, val] = s;
            return `<tr class="h-[19px]"><td class="p-0"><div class="flex items-center whitespace-nowrap ${val ? 'pl-[21px]' : 'pl-[5px]'}">${icon(ic, 'size-4 shrink-0')}<span class="ml-[2px]">${name}</span></div></td>
                <td class="pl-[7px] whitespace-pre">${val || ''}</td><td></td></tr>`;
        }).join('');

        // Tick boxes
        const tick = (id, on) => `<span class="relative size-[13px] shrink-0"><input type="checkbox" id="${id}" ${on ? 'checked' : ''} class="peer block size-[13px] appearance-none bg-white border border-[#333]"><svg viewBox="0 0 13 13" class="absolute inset-0 size-[13px] hidden peer-checked:block pointer-events-none"><path d="M3 6.500l2.500 2.500L10.500 3.500" fill="none" stroke="#333" stroke-width="1.300"/></svg></span>`;
        const stress = [['cpu', 'Stress CPU', 1], ['fpu', 'Stress FPU', 0], ['chip', 'Stress cache', 1],
            ['ram', 'Stress system memory', 1], ['drive', 'Stress local disks', 0], ['gpu', 'Stress GPU(s)', 1]];
        document.getElementById('stress').innerHTML = stress.map(([ic, name, on], i) =>
            `<div class="h-5 flex items-center">${icon(ic, 'size-4 mb-[3px]')}<label for="s${i}" class="ml-2 pt-px flex items-center gap-[3px] whitespace-nowrap">${tick('s' + i, on)}${name}</label></div>`).join('');

        const series = [['Motherboard', 0, 'text-[#ff0]'], ['CPU', 1, 'text-[#a9c0f0]'], ['CPU Core #1', 1, 'text-[#0f0]'],
            ['CPU Core #2', 1, 'text-[#0ff]'], ['CPU Core #3', 1, 'text-[#ff40ff]'], ['CPU Core #4', 1, 'text-[#c8d8c0]'],
            ['Samsung SSD 870 EVO 500GB', 0, 'text-[#f0c878]']];
        const legend = ([name, on, cls], i) => `<label for="t${name.length}${i}" class="flex items-center gap-[3px] whitespace-nowrap leading-[13px] ${cls}">${tick('t' + name.length + i, on)}${name}</label>`;
        document.getElementById('series').innerHTML = series.slice(0, 6).map(legend).join('');
        document.getElementById('series2').innerHTML = series.slice(6).map(legend).join('');

        // Graph grids
        function grid(id, x0, x1, vx, top, y0, y1, step) {
            let d = '';
            for (let y = y0; y <= y1; y += step) d += `M${x0} ${y}H${x1}`;
            for (let x = vx; x <= x1 + 1; x += 10) d += `M${x} ${top}V${y1}`;
            document.getElementById(id).setAttribute('d', d);
        }
        grid('grid1', 50, 654, 54.5, 51, 57.5, 117.5, 6);
        grid('grid2', 50, 680, 56.5, 31, 38.5, 118.5, 8);

        // Temperature curves: [colour, start, end, noise, idle noise]
        const curves = [['#00ff00', 69, 62, 5, 1], ['#00ffff', 68, 62, 4, 4], ['#ff40ff', 68, 57, 8, 2],
            ['#a9b8e6', 65, 57, 2, 1], ['#e0ecd8', 64, 58, 7, 1]];
        let seed = 7;
        const noise = () => (seed = (seed * 1103515245 + 12345) % 2147483648) / 1073741824 - 1;
        document.getElementById('temps').innerHTML = curves.map(([c, a, b, n, idle]) => {
            const pts = [];
            for (let x = 574; x < 583; x += 2) pts.push(`${x},${Math.round(95 + idle * noise())}`);
            pts.push('584,94');
            for (let x = 587; x <= 654; x += 2) pts.push(`${x},${Math.max(52, Math.round(a + (b - a) * (x - 587) / 67 + n * noise()))}`);
            return `<polyline points="${pts.join(' ')}" stroke="${c}"/>`;
        }).join('');

        const spikes = [[548, 2], [553, 3], [575, 3], [607, 5], [615, 3], [619, 3], [626, 3], [630, 3], [641, 7], [651, 3], [655, 5], [665, 5]];
        document.getElementById('throttle').setAttribute('d', 'M341 118.5' + spikes.map(([x, h]) => `H${x - 2}l2 ${-h}l2 ${h}`).join('') + 'H680');

        // HWiNFO rows: [kind, icon, label, values, highlighted]; kind g = group, s = single, c = collapsed
        const hw = [
            ['s', 'dial', 'Используемая физическая память', ['31,355 МБ', '3,140 МБ', '31,368 МБ', '26,511 МБ'], 1],
            ['s', 'dial', 'Доступная физическая память', ['1,272 МБ', '1,259 МБ', '29,487 МБ', '6,116 МБ'], 1],
            ['s', 'dial', 'Физическая нагрузка на память', ['!96.1 %', '9.6 %', '!96.1 %', '81.2 %']],
            ['s', 'dial', 'Использование файла подкачки', ['0.6 %', '0.0 %', '0.7 %', '0.5 %']],
            null,
            ['g', 'darkchip', 'ЦП [#0]: Intel Core i5-14600KF'],
            ['c', 'bolt', 'Core VIDs', ['1.334 В', '1.057 В', '1.353 В', '1.299 В'], 1],
            ['s', 'bolt', 'Uncore VID', ['1.184 В', '1.121 В', '1.184 В', '1.166 В'], 1],
            ['s', 'bolt', 'SA VID', ['1.201 В', '1.201 В', '1.201 В', '1.201 В']],
            ['c', 'dial', 'Базовые частоты', ['4,546.0 МГц', '3,990.2 МГц', '5,288.3 МГц', '4,541.9 МГц'], 1],
            ['s', 'dial', 'Частота шины', ['99.8 МГц', '99.8 МГц', '99.8 МГц', '99.8 МГц']],
            ['s', 'dial', 'Ring/LLC Частота', ['4,489.0 МГц', '4,489.0 МГц', '4,688.5 МГц', '4,508.0 МГц'], 1],
            ['c', 'dial', 'Основные эффективные частоты', ['4,711.0 МГц', '0.2 МГц', '5,289.1 МГц', '3,932.0 МГц'], 1],
            ['s', 'dial', 'Средняя эффективная частота', ['4,896.7 МГц', '53.8 МГц', '4,958.2 МГц', '4,087.0 МГц'], 1],
            ['c', 'dial', 'Использование ядра', ['100.0 %', '0.0 %', '100.0 %', '83.0 %']],
            ['s', 'dial', 'Максимальное использование ЦП / потоков', ['100.0 %', '4.7 %', '100.0 %', '84.6 %']],
            ['s', 'dial', 'Общая загрузка ЦП', ['100.0 %', '0.9 %', '100.0 %', '83.0 %']],
            ['s', 'dial', 'Модуляция часов по запросу', ['100.0 %', '100.0 %', '100.0 %', '100.0 %']],
            ['c', 'dial', 'Использование ядра', ['135.9 %', '0.0 %', '151.0 %', '113.0 %'], 1],
            ['s', 'dial', 'Общая загрузка ЦП', ['135.9 %', '1.6 %', '136.1 %', '113.0 %'], 1],
            ['c', 'dial', 'Умножители частоты ядра', ['45.6 x', '40.0 x', '53.0 x', '45.5 x']],
            ['s', 'dial', 'Uncore Множитель', ['45.0 x', '45.0 x', '47.0 x', '45.2 x']],
            null,
            ['g', 'darkchip', 'ЦП [#0]: Intel Core i5-14600KF: DTS'],
            ['c', 'therm', 'Внутренние температуры', ['86 °C', '27 °C', '!100 °C', '71 °C'], 1],
            ['c', 'therm', 'Базовое расстояние до TjMAX', ['14 °C', '!0 °C', '73 °C', '29 °C'], 1],
            ['s', 'therm', 'ЦП Весь', ['!97 °C', '35 °C', '!100 °C', '81 °C'], 1],
            ['s', 'therm', 'Core Максимум', ['!97 °C', '33 °C', '!100 °C', '81 °C'], 1],
            ['c', 'dial', 'Тепловое дросселирование сердечника', ['!Да', 'Нет', '!Да', '']],
            ['c', 'dial', 'Критическая температура ядра', ['Нет', 'Нет', 'Нет', '']],
            ['c', 'dial', 'Превышен предел мощности ядра', ['Нет', 'Нет', 'Нет', '']],
            ['s', 'dial', 'Пакет / кольцо термического дросселиров...', ['!Да', 'Нет', '!Да', '']],
            ['s', 'dial', 'Критическая температура корпуса / кольца', ['Нет', 'Нет', 'Нет', '']],
            ['s', 'dial', 'Превышен предел мощности пакета / кольца', ['Нет', 'Нет', 'Нет', '']],
            null,
            ['g', 'darkchip', 'ЦП [#0]: Intel Core i5-14600KF: Enhanced']
        ];
        document.getElementById('hw').innerHTML = hw.map((r, i) => {
            if (!r) return '<tr class="h-[17px]"><td colspan="5"></td></tr>';
            const [kind, ic, name, vals, hot] = r;
            if (kind === 'g') {
                return `<tr class="h-[17px]"><td colspan="5" class="p-0"><div class="flex items-center h-[17px] pl-2 italic">${icon('chev-d', 'size-[10px] mr-[7px] text-[#404040]')}${icon(ic, 'size-[15px]')}<span class="flex-1 h-full pl-[2px] bg-[#dcdcdc] border-t border-[#f0f0f0]">${name}</span></div></td></tr>`;
            }
            const bg = i % 2 ? 'bg-[#f0f0f0]' : '';
            const cells = vals.map((v, n) => `<td class="p-0 pt-px pr-[6px] text-right whitespace-nowrap ${n === 0 && hot ? 'bg-[#cfe4ff] shadow-[inset_0_-1px_0_#f0f0f0]' : bg} ${v[0] === '!' ? 'text-[#f00]' : ''}">${v.replace('!', '')}</td>`).join('');
            const arrow = kind === 'c' ? icon('chev-r', 'size-[10px] mr-[6px] text-[#404040]') : '';
            return `<tr class="h-[17px]"><td class="p-0"><div class="flex items-center h-[17px] pl-[25px]">${arrow}${icon(ic, 'size-[15px] shrink-0')}<span class="flex-1 h-full pt-px pl-[2px] whitespace-nowrap ${bg}">${name}</span></div></td>${cells}</tr>`;
        }).join('');
    </script>
</body>
</html>
